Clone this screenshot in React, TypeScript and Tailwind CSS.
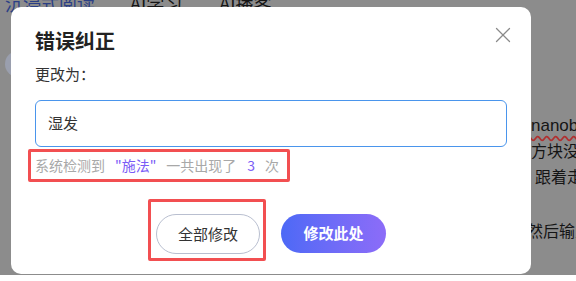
import { X } from "lucide-react";

const cjk = { fontFamily: '"Noto Sans CJK SC", "Noto Sans", sans-serif' };

const Backdrop = () => {
    return (
        <div className="w-[576px] h-[281px] bg-[#8c8c8c] text-[#151515]" style={cjk}>
            <div className="flex items-center h-[18px] -mt-[6px] text-[18px] leading-[18px]">
                <span className="ml-[5px] text-[#2b3f86]">沉浸式阅读</span>
                <span className="ml-[35px]">AI学习</span>
                <span className="ml-[37px]">AI播客</span>
            </div>
            <div className="flex">
                <div className="shrink-0 ml-[5px] mt-[39px] w-[26px] h-[26px] rounded-full bg-[#9a9fae]"></div>
                <div className="shrink-0 ml-[500px] mt-[104px] text-[16px] leading-[26px] whitespace-nowrap">
                    <p className="text-[17px] leading-[20px] underline decoration-wavy decoration-[#b03030] underline-offset-[4px]" style={{ fontFamily: '"Liberation Sans", sans-serif' }}>nanob</p>
                    <p className="mt-[1px]">方块没</p>
                    <p className="pl-[4px]">跟着走</p>
                    <p className="mt-[28px] -ml-[4px]">然后输入</p>
                </div>
            </div>
        </div>
    );
};

const App = () => {
    return (
        <div className="relative w-[576px] h-[281px] overflow-hidden">
            <Backdrop />
            <div className="absolute left-[11px] top-[7px] w-[520px] h-[267px] rounded-[10px] bg-white pl-[24px]" style={cjk}>
                <button className="absolute right-[15px] top-[15px] text-[#8a8a8a]">
                    <X size={26} strokeWidth={1.15} />
                </button>
                <h2 className="mt-[20px] text-[20px] leading-[28px] font-bold text-[#222]">错误纠正</h2>
                <p className="mt-[7px] text-[15px] leading-[24px] text-[#333]">更改为：</p>
                <div className="mt-[14px] w-[472px] h-[47px] rounded-[6px] border border-[#4a95ec] flex items-center pl-[12px] text-[15px] text-[#333]">
                    湿发
                </div>
                <div className="mt-[2px] -ml-[7px] w-[262px] h-[33px] border-[3px] border-[#f24f51] rounded-[2px] flex items-center pl-[4px] text-[14px] text-[#a8a8a8] whitespace-nowrap">
                    <span>系统检测到</span>
                    <span className="ml-[10px] text-[#7a5cf6]">"施法"</span>
                    <span className="ml-[10px]">一共出现了</span>
                    <span className="ml-[11px] text-[#7a5cf6]">3</span>
                    <span className="ml-[10px]">次</span>
                </div>
                <div className="mt-[17px] ml-[113px] flex items-start">
                    <div className="w-[118px] h-[62px] border-[3px] border-[#f24f51] rounded-[2px] pl-[5px] pt-[12px]">
                        <button className="w-[104px] h-[40px] rounded-full border border-[#b9bfd0] text-[15px] text-[#333]">全部修改</button>
                    </div>
                    <button className="ml-[15px] mt-[15px] w-[105px] h-[39px] rounded-full bg-gradient-to-r from-[#4c69f6] to-[#8c6cf8] text-white text-[15px] font-bold">修改此处</button>
                </div>
            </div>
        </div>
    );
};

export default App;
